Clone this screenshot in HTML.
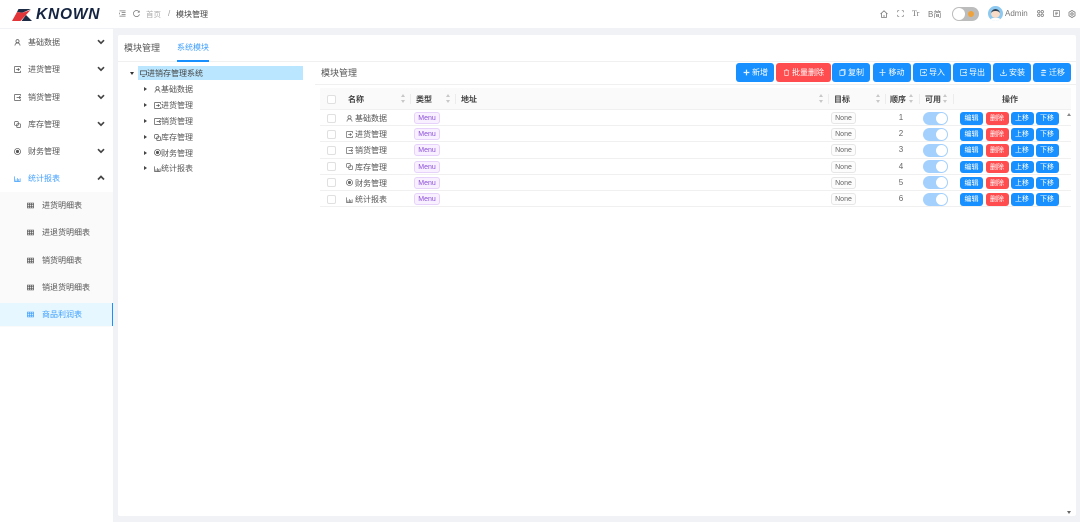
<!DOCTYPE html>
<html lang="zh"><head><meta charset="utf-8"><title>模块管理</title>
<style>
*{box-sizing:border-box}
html,body{margin:0;padding:0}
body{width:1080px;height:522px;overflow:hidden;background:#f0f2f5;position:relative;font-family:"Liberation Sans","Noto Sans CJK SC",sans-serif;font-size:8px;color:#333}
.wrap{position:absolute;inset:0;filter:blur(.35px)}
.a{position:absolute;white-space:nowrap}
svg{position:absolute;overflow:visible;fill:none;stroke:currentColor;stroke-width:.8}
.m{left:0;width:113px;height:27px;line-height:27px;color:#555}
.m .t{position:absolute;left:28px}
.m .s{position:absolute;left:42px}
.m svg.i{left:14px;top:10px;width:7px;height:7px}
.m svg.g{left:27px;top:10px;width:7px;height:7px}
.m svg.c{left:96.500px;top:10px;width:8px;height:6px;stroke-width:1.700;color:#444}
.tr{left:0;height:16px;line-height:18px;color:#555}
.tr i{position:absolute;left:0;top:6px;width:0;height:0;border-left:3px solid #444;border-top:2.500px solid transparent;border-bottom:2.500px solid transparent}
.btn{top:63px;height:19px;line-height:20px;border-radius:3px;background:#1890ff;color:#fff;font-size:8px;text-align:left}
.btn svg{top:6px;width:7px;height:7px;color:#e8f4ff}
.btn span{position:absolute;top:0}
.th{top:88px;height:22px;line-height:24px;font-weight:bold;color:#444;font-size:8px}
.dv{top:94px;width:1px;height:10px;background:#ececec}
.so{top:94px;width:5px;height:9px}
.so:before,.so:after{content:"";position:absolute;left:0;border-left:2.500px solid transparent;border-right:2.500px solid transparent}
.so:before{top:0;border-bottom:3.500px solid #c8c8c8}
.so:after{bottom:0;border-top:3.500px solid #c8c8c8}
.r{left:320px;width:751px;height:16.200px;border-bottom:1px solid #f0f0f0;line-height:17.500px}
.r>*{position:absolute}
.cb{left:7px;top:3.500px;width:9px;height:9px;border:1px solid #e0e0e0;border-radius:2px;background:#fff}
.r svg.i{left:26px;top:4.500px;width:7px;height:7px;color:#666}
.nm{left:35px;color:#555}
.mn{left:94px;top:2px;width:26px;height:12px;line-height:12px;text-align:center;font-size:7px;border:1px solid #e6d2fb;background:#f9f0ff;color:#8a4fd8;border-radius:3px}
.no{left:511px;top:2px;width:25px;height:12px;line-height:12px;text-align:center;font-size:7px;border:1px solid #e6e6e6;background:#fcfcfc;color:#666;border-radius:3px}
.n{left:571px;width:20px;text-align:center;color:#666;line-height:16px}
.sw{left:603px;top:1.700px;width:25px;height:13px;border-radius:6.500px;background:#a3d0fd}
.sw:after{content:"";position:absolute;right:1px;top:1px;width:11px;height:11px;border-radius:50%;background:#fff}
.b{top:2px;width:23px;height:12.500px;line-height:14px;text-align:center;font-size:7px;color:#fff;background:#1890ff;border-radius:3px}
.b.d{background:#ff4d4f}
.t1{left:640px}.t2{left:665.500px}.t3{left:690.500px}.t4{left:715.500px}
</style></head><body>
<svg width="0" height="0" style="position:absolute"><defs>
<symbol id="u" viewBox="0 0 8 8"><circle cx="4" cy="2.500" r="1.800"/><path d="M1 7.500C1.300 5.500 2.500 4.600 4 4.600S6.700 5.500 7 7.500"/></symbol>
<symbol id="in" viewBox="0 0 8 8"><path d="M7.500 2.500V.7H.7v6.600h6.800V5.500M2.500 4h4M4.500 2.600 6 4 4.500 5.400" /></symbol>
<symbol id="out" viewBox="0 0 8 8"><path d="M7.500 2V.7H.7v6.600h6.800V6M3 4h4.500M6 2.600 7.500 4 6 5.400"/></symbol>
<symbol id="st" viewBox="0 0 8 8"><rect x=".7" y=".7" width="4.200" height="4.200" rx=".6"/><rect x="3.200" y="3.200" width="4.200" height="4.200" rx=".6"/></symbol>
<symbol id="fi" viewBox="0 0 8 8"><circle cx="4" cy="4" r="3.500"/><circle cx="4" cy="4" r="1.400" fill="currentColor"/></symbol>
<symbol id="ch" viewBox="0 0 8 8"><path d="M.7 1.500V7.400H7.500M2.200 7V5M3.800 7V3.500M5.400 7V4.700M7 7V3.800"/></symbol>
<symbol id="gr" viewBox="0 0 8 8"><path d="M.5 1.200h7v5.600h-7zM.5 3.100h7M.5 4.900h7M2.800 1.200v5.600M5.200 1.200v5.600"/></symbol>
<symbol id="dn" viewBox="0 0 8 6"><path d="M1 1.200 4 4.200 7 1.200"/></symbol>
<symbol id="up" viewBox="0 0 8 6"><path d="M1 4.500 4 1.500 7 4.500"/></symbol>
</defs></svg>
<div class="wrap">

<!-- header -->
<div class="a" style="left:0;top:0;width:1080px;height:28px;background:#fff"></div>
<svg style="left:12px;top:9px;width:20px;height:12px;stroke:none" viewBox="0 0 20 12"><path fill="#1d2b44" d="M6.500 0H19L10.500 3.600 5 3z"/><path fill="#e2353a" d="M0 12 5 3l5.500.8L18.500 1 8.500 12z"/><path fill="#1d2b44" d="M14 6l6 6H9.500z"/></svg>
<div class="a" style="left:36px;top:5px;height:20px;line-height:20px;font-size:15.500px;font-weight:bold;font-style:italic;color:#14233f;letter-spacing:.8px">KNOWN</div>
<svg style="left:119px;top:10px;width:7px;height:7px;color:#777" viewBox="0 0 8 8"><path d="M.5 1h7M3 3h4.500M3 5h4.500M.5 7h7M.5 3v2"/></svg>
<svg style="left:133px;top:10px;width:7px;height:7px;color:#777" viewBox="0 0 8 8"><path d="M7 2.200A3.500 3.500 0 1 0 7.400 5M7.200.8v1.800H5.400"/></svg>
<div class="a" style="left:146px;top:7px;line-height:15px;color:#aaa;font-size:7.500px">首页</div>
<div class="a" style="left:168px;top:7px;line-height:14px;color:#999">/</div>
<div class="a" style="left:176px;top:7px;line-height:15px;color:#444">模块管理</div>
<svg style="left:880px;top:10px;width:8px;height:8px;color:#777" viewBox="0 0 8 8"><path d="M.5 4 4 .8 7.500 4M1.500 3.400v4h5v-4M3 6h2"/></svg>
<svg style="left:897px;top:10px;width:7px;height:7px;color:#777" viewBox="0 0 8 8"><path d="M.8 2.500V.8h1.700M5.500.8h1.700v1.700M7.200 5.500v1.700H5.500M2.500 7.200H.8V5.500"/></svg>
<div class="a" style="left:912px;top:7px;line-height:14px;color:#777;font-family:'Liberation Serif',serif;font-size:8px">Tr</div>
<div class="a" style="left:928px;top:7px;line-height:15px;color:#777;font-size:8px;letter-spacing:.2px">B简</div>
<div class="a" style="left:952px;top:7px;width:27px;height:14px;border-radius:7px;background:#bcbcbc"></div>
<div class="a" style="left:953px;top:8px;width:12px;height:12px;border-radius:50%;background:#fff"></div>
<div class="a" style="left:968px;top:11px;width:6px;height:6px;border-radius:50%;background:#f0a23a"></div>
<div class="a" style="left:988px;top:6px;width:15px;height:15px;border-radius:50%;background:#8cc8f0;overflow:hidden">
  <div class="a" style="left:3px;top:2.500px;width:9px;height:9px;border-radius:50%;background:#f8dcc8;border-top:2.500px solid #34404e"></div>
  <div class="a" style="left:2px;top:11.500px;width:11px;height:6px;border-radius:4px;background:#fff"></div>
</div>
<div class="a" style="left:1005px;top:7px;line-height:14px;color:#777;font-size:8px">Admin</div>
<svg style="left:1037px;top:10px;width:7px;height:7px;color:#777" viewBox="0 0 8 8"><circle cx="2" cy="2" r="1.400"/><circle cx="6" cy="2" r="1.400"/><circle cx="2" cy="6" r="1.400"/><circle cx="6" cy="6" r="1.400"/></svg>
<svg style="left:1053px;top:10px;width:7px;height:7px;color:#777" viewBox="0 0 8 8"><path d="M.7.7h6.600v6.600H.7zM2.500 2.500h3M2.500 4h3M2.500 5.500h2"/></svg>
<svg style="left:1068px;top:9.500px;width:8px;height:8px;color:#777" viewBox="0 0 8 8"><path d="M4 .5 7 2.200v3.600L4 7.500 1 5.800V2.200z"/><circle cx="4" cy="4" r="1.200"/></svg>

<!-- sidebar -->
<div class="a" style="left:0;top:29px;width:113px;height:493px;background:#fff"></div>
<div class="a" style="left:0;top:192px;width:113px;height:135px;background:#fafafa"></div>
<div class="a" style="left:0;top:303px;width:113px;height:23px;background:#e6f7ff;border-right:1.500px solid #1890ff"></div>

<div class="a m" style="top:29px"><svg class="i"><use href="#u"/></svg><span class="t">基础数据</span><svg class="c"><use href="#dn"/></svg></div>
<div class="a m" style="top:56px"><svg class="i"><use href="#in"/></svg><span class="t">进货管理</span><svg class="c"><use href="#dn"/></svg></div>
<div class="a m" style="top:83.500px"><svg class="i"><use href="#out"/></svg><span class="t">销货管理</span><svg class="c"><use href="#dn"/></svg></div>
<div class="a m" style="top:110.500px"><svg class="i"><use href="#st"/></svg><span class="t">库存管理</span><svg class="c"><use href="#dn"/></svg></div>
<div class="a m" style="top:138px"><svg class="i"><use href="#fi"/></svg><span class="t">财务管理</span><svg class="c"><use href="#dn"/></svg></div>
<div class="a m" style="top:165px;color:#3f9fff"><svg class="i"><use href="#ch"/></svg><span class="t">统计报表</span><svg class="c" style="color:#444"><use href="#up"/></svg></div>
<div class="a m" style="top:192px"><svg class="g"><use href="#gr"/></svg><span class="s">进货明细表</span></div>
<div class="a m" style="top:219px"><svg class="g"><use href="#gr"/></svg><span class="s">进退货明细表</span></div>
<div class="a m" style="top:246.500px"><svg class="g"><use href="#gr"/></svg><span class="s">销货明细表</span></div>
<div class="a m" style="top:273.500px"><svg class="g"><use href="#gr"/></svg><span class="s">销退货明细表</span></div>
<div class="a m" style="top:301px;color:#3f9fff"><svg class="g"><use href="#gr"/></svg><span class="s">商品利润表</span></div>

<!-- card -->
<div class="a" style="left:118px;top:35px;width:958px;height:481px;background:#fff;border-radius:2px"></div>
<div class="a" style="left:124px;top:40.500px;line-height:15px;font-size:9px;color:#555">模块管理</div>
<div class="a" style="left:177px;top:40px;line-height:15px;color:#3f9fff">系统模块</div>
<div class="a" style="left:118px;top:60.500px;width:958px;height:1px;background:#f0f0f0"></div>
<div class="a" style="left:177px;top:60px;width:32px;height:1.500px;background:#1890ff"></div>

<!-- tree -->
<div class="a" style="left:129.500px;top:71.500px;border-top:3px solid #333;border-left:2.500px solid transparent;border-right:2.500px solid transparent"></div>
<div class="a" style="left:138px;top:66px;width:165px;height:14px;background:#bae7ff"></div>
<svg style="left:140px;top:69.500px;width:7px;height:7px;color:#444" viewBox="0 0 8 8"><path d="M.5 1h7v4.500h-7zM2.500 7.300h3"/></svg>
<div class="a" style="left:147px;top:66px;line-height:15.500px;color:#444">进销存管理系统</div>

<div class="a tr" style="left:144px;top:81px;width:100px"><i></i><svg style="left:10px;top:4.500px;width:7px;height:7px"><use href="#u"/></svg><span style="position:absolute;left:17px">基础数据</span></div>
<div class="a tr" style="left:144px;top:97px;width:100px"><i></i><svg style="left:10px;top:4.500px;width:7px;height:7px"><use href="#in"/></svg><span style="position:absolute;left:17px">进货管理</span></div>
<div class="a tr" style="left:144px;top:113px;width:100px"><i></i><svg style="left:10px;top:4.500px;width:7px;height:7px"><use href="#out"/></svg><span style="position:absolute;left:17px">销货管理</span></div>
<div class="a tr" style="left:144px;top:129px;width:100px"><i></i><svg style="left:10px;top:4.500px;width:7px;height:7px"><use href="#st"/></svg><span style="position:absolute;left:17px">库存管理</span></div>
<div class="a tr" style="left:144px;top:144.500px;width:100px"><i></i><svg style="left:10px;top:4.500px;width:7px;height:7px"><use href="#fi"/></svg><span style="position:absolute;left:17px">财务管理</span></div>
<div class="a tr" style="left:144px;top:160px;width:100px"><i></i><svg style="left:10px;top:4.500px;width:7px;height:7px"><use href="#ch"/></svg><span style="position:absolute;left:17px">统计报表</span></div>

<!-- title + toolbar -->
<div class="a" style="left:321px;top:66px;line-height:15px;font-size:9px;color:#555">模块管理</div>
<div class="a" style="left:315px;top:84px;width:761px;height:1px;background:#f0f0f0"></div>

<div class="a btn" style="left:736px;width:38px"><svg style="left:6.500px" viewBox="0 0 8 8"><path d="M4 .7v6.600M.7 4h6.600" stroke-width="1.400"/></svg><span style="left:16px">新增</span></div>
<div class="a btn" style="left:776px;width:55px;background:#ff4d4f"><svg style="left:6.500px;color:#ffe6e6" viewBox="0 0 8 8"><path d="M1 1.800h6M2 1.800v5.500h4V1.800M3 .7h2"/></svg><span style="left:16px">批量删除</span></div>
<div class="a btn" style="left:832px;width:38px"><svg style="left:6.500px" viewBox="0 0 8 8"><path d="M2.500 1.800V.7h4.500v5.500H6M1 1.800h5v5.500H1z"/></svg><span style="left:16px">复制</span></div>
<div class="a btn" style="left:872.500px;width:38.500px"><svg style="left:6.500px" viewBox="0 0 8 8"><path d="M4 .5v7M.5 4h7M3 1.500 4 .5l1 1M3 6.500l1 1 1-1"/></svg><span style="left:16px">移动</span></div>
<div class="a btn" style="left:913px;width:38px"><svg style="left:6.500px" viewBox="0 0 8 8"><use href="#in"/></svg><span style="left:16px">导入</span></div>
<div class="a btn" style="left:953px;width:38px"><svg style="left:6.500px" viewBox="0 0 8 8"><use href="#out"/></svg><span style="left:16px">导出</span></div>
<div class="a btn" style="left:993px;width:38px"><svg style="left:6.500px" viewBox="0 0 8 8"><path d="M4 .7v4.800M2.300 3.800 4 5.500l1.700-1.700M.7 5.500v1.800h6.600V5.500"/></svg><span style="left:16px">安装</span></div>
<div class="a btn" style="left:1033px;width:38px"><svg style="left:6.500px" viewBox="0 0 8 8"><path d="M1.500 2a2.800 1.500 0 0 1 5 0H2.500M1 4h6M5 6H1.500M1.500 7.300h5"/></svg><span style="left:16px">迁移</span></div>

<!-- table head -->
<div class="a" style="left:320px;top:88px;width:751px;height:22px;background:#fafafa;border-bottom:1px solid #f0f0f0"></div>
<div class="a" style="left:327px;top:94.500px;width:9px;height:9px;border:1px solid #e0e0e0;border-radius:2px;background:#fff"></div>
<div class="a th" style="left:348px">名称</div><div class="a so" style="left:401px"></div><div class="a dv" style="left:410px"></div>
<div class="a th" style="left:416px">类型</div><div class="a so" style="left:446px"></div><div class="a dv" style="left:455px"></div>
<div class="a th" style="left:461px">地址</div><div class="a so" style="left:819px"></div><div class="a dv" style="left:828px"></div>
<div class="a th" style="left:834px">目标</div><div class="a so" style="left:876px"></div><div class="a dv" style="left:885px"></div>
<div class="a th" style="left:890px">顺序</div><div class="a so" style="left:909px"></div><div class="a dv" style="left:919px"></div>
<div class="a th" style="left:925px">可用</div><div class="a so" style="left:943px"></div><div class="a dv" style="left:953px"></div>
<div class="a th" style="left:1002px">操作</div>

<!-- rows -->
<div class="a r" style="top:110px"><span class="cb"></span><svg class="i"><use href="#u"/></svg><span class="nm">基础数据</span><span class="mn">Menu</span><span class="no">None</span><span class="n">1</span><span class="sw"></span><span class="b t1">编辑</span><span class="b d t2">删除</span><span class="b t3">上移</span><span class="b t4">下移</span></div>
<div class="a r" style="top:126.200px"><span class="cb"></span><svg class="i"><use href="#in"/></svg><span class="nm">进货管理</span><span class="mn">Menu</span><span class="no">None</span><span class="n">2</span><span class="sw"></span><span class="b t1">编辑</span><span class="b d t2">删除</span><span class="b t3">上移</span><span class="b t4">下移</span></div>
<div class="a r" style="top:142.400px"><span class="cb"></span><svg class="i"><use href="#out"/></svg><span class="nm">销货管理</span><span class="mn">Menu</span><span class="no">None</span><span class="n">3</span><span class="sw"></span><span class="b t1">编辑</span><span class="b d t2">删除</span><span class="b t3">上移</span><span class="b t4">下移</span></div>
<div class="a r" style="top:158.600px"><span class="cb"></span><svg class="i"><use href="#st"/></svg><span class="nm">库存管理</span><span class="mn">Menu</span><span class="no">None</span><span class="n">4</span><span class="sw"></span><span class="b t1">编辑</span><span class="b d t2">删除</span><span class="b t3">上移</span><span class="b t4">下移</span></div>
<div class="a r" style="top:174.800px"><span class="cb"></span><svg class="i"><use href="#fi"/></svg><span class="nm">财务管理</span><span class="mn">Menu</span><span class="no">None</span><span class="n">5</span><span class="sw"></span><span class="b t1">编辑</span><span class="b d t2">删除</span><span class="b t3">上移</span><span class="b t4">下移</span></div>
<div class="a r" style="top:191px"><span class="cb"></span><svg class="i"><use href="#ch"/></svg><span class="nm">统计报表</span><span class="mn">Menu</span><span class="no">None</span><span class="n">6</span><span class="sw"></span><span class="b t1">编辑</span><span class="b d t2">删除</span><span class="b t3">上移</span><span class="b t4">下移</span></div>

<!-- scrollbar arrows -->
<div class="a" style="left:1066.500px;top:112.500px;border-bottom:3px solid #888;border-left:2px solid transparent;border-right:2px solid transparent"></div>
<div class="a" style="left:1066.500px;top:511px;border-top:3px solid #666;border-left:2px solid transparent;border-right:2px solid transparent"></div>
</div>
</body></html>
